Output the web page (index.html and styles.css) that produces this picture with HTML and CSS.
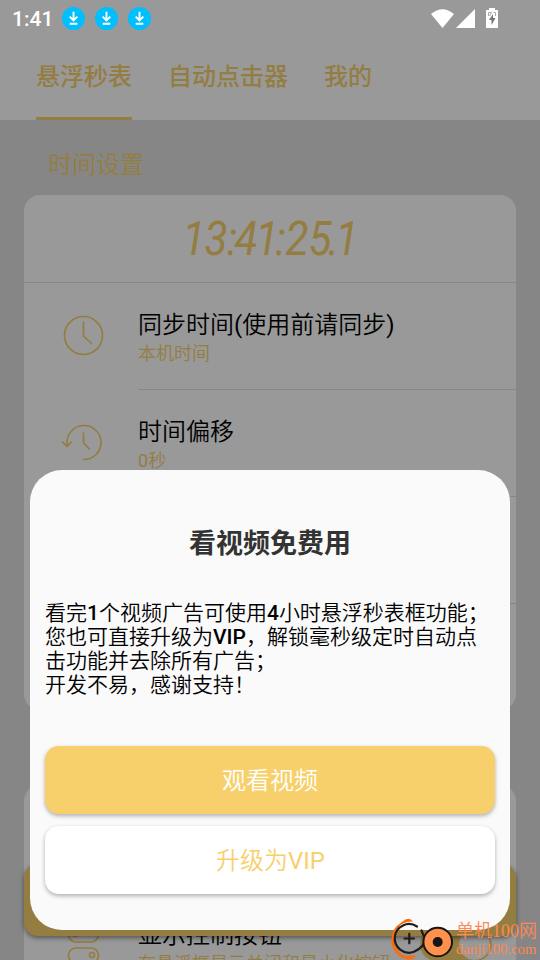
FILE: index.html
```html
<!DOCTYPE html>
<html lang="zh-CN">
<head>
<meta charset="utf-8">
<title>悬浮秒表</title>
<link rel="stylesheet" href="styles.css">
</head>
<body>
<div class="screen">
  <main class="app">
    <nav class="tabs">
      <span class="tab active">悬浮秒表</span><span class="tab">自动点击器</span><span class="tab">我的</span>
    </nav>
    <h2 class="section-title">时间设置</h2>
    <section class="card time-card">
      <div class="clock"><span>1</span><span>3</span><span>:</span><span>4</span><span>1</span><span>:</span><span>2</span><span>5</span><span>.</span><span>1</span></div>
      <div class="row">
        <div class="icon"><svg width="44" height="44" viewBox="0 0 44 44"><circle cx="22.500" cy="22.500" r="19"/><path d="M22.500 9v14l8 7.500"/></svg></div>
        <div class="info"><div class="name">同步时间<span class="latin">(</span>使用前请同步<span class="latin">)</span></div><div class="value">本机时间</div></div>
      </div>
      <div class="row">
        <div class="icon"><svg width="44" height="44" viewBox="0 0 44 44"><path d="M6 26V23A17 17 0 1 1 22.500 39.500M1.500 22l4.500 4.500 4.500-4.500M22.500 13v10l6 6"/></svg></div>
        <div class="info"><div class="name">时间偏移</div><div class="value"><span class="latin">0</span>秒</div></div>
      </div>
      <div class="row"><div class="icon"></div><div class="info"></div></div>
    </section>
    <section class="card display-card">
      <div class="row control-row">
        <div class="icon"><svg width="34" height="40" viewBox="0 0 34 40"><rect x="1.500" y="1" width="30" height="15" rx="7.500"/><circle cx="8" cy="8" r="2.500"/><rect x="1.500" y="22" width="30" height="15" rx="7.500"/><circle cx="25" cy="29" r="2.500"/></svg></div>
        <div class="info"><div class="name">显示控制按钮</div><div class="value">在悬浮框显示关闭和最小化按钮</div></div>
        <div class="switch"><i></i></div>
      </div>
    </section>
    <div class="start-button"></div>
  </main>
  <div class="scrim"></div>
  <header class="status">
    <span class="time">1:41</span>
    <span class="download"><svg viewBox="0 0 24 24"><path d="M12 5v9M8 10l4 4L16 10M8 17.500h8"/></svg></span>
    <span class="download"><svg viewBox="0 0 24 24"><path d="M12 5v9M8 10l4 4L16 10M8 17.500h8"/></svg></span>
    <span class="download"><svg viewBox="0 0 24 24"><path d="M12 5v9M8 10l4 4L16 10M8 17.500h8"/></svg></span>
    <svg class="signals" width="70" height="24" viewBox="0 0 70 24"><path d="M0 7Q11.500-2.500 23 7L11.500 21z"/><path d="M25 21H44V2z"/><path d="M58 3V1h6v2h3v18H55V3z"/><path class="bolt" d="M62 7l-4 6h2.500v5l4-7H62z"/><path class="notch" d="M57.500 9V5.500h3L58.500 9M62.500 5.500h2V9"/></svg>
  </header>
  <section class="dialog">
    <h1>看视频免费用</h1>
    <p>看完<b>1</b>个视频广告可使用<b>4</b>小时悬浮秒表框功能；<br>您也可直接升级为<b>VIP</b>，解锁毫秒级定时自动点<br>击功能并去除所有广告；<br>开发不易，感谢支持！</p>
    <button class="primary">观看视频</button>
    <button class="secondary">升级为<span class="latin">VIP</span></button>
  </section>
  <div class="watermark">
    <svg width="66" height="44" viewBox="0 0 66 44"><path class="orange" d="M23 5.500Q13 5 7.500 12 3 19 4.500 27 7 37 15 40L26 39.500Q24 44 18 43.500 5 41 2 29-1 14 12 6 19 0 23 5.500z"/><path class="ink" d="M27 10.500A14.300 14.300 0 1 0 24 35.800Q36 30 35.500 21M31.500 14.500l2 5M19.300 17.800v9.500M14.500 22.500h9.500"/><circle class="disc" cx="47.700" cy="26" r="14.300"/><circle class="hub" cx="47.700" cy="26" r="5"/></svg>
    <div class="brand"><span>单机100网</span><small>danji100.com</small></div>
  </div>
</div>
</body>
</html>
```
FILE: styles.css
```css
* { box-sizing: border-box; }
body { margin: 0; font-family: Roboto, "Noto Sans CJK SC", sans-serif; font-weight: 350; }
.screen { position: relative; width: 540px; height: 960px; overflow: hidden; }
.app { height: 960px; overflow: hidden; background: #e0e0e0; color: #000; }
.latin { font-weight: 400; }
.tabs { display: flex; gap: 36px; height: 120px; padding: 36px 36px 0; background: #fff; }
.tab { height: 84px; padding-top: 23px; font-size: 24px; line-height: 36px; font-weight: 500; color: #f7d06b; border-bottom: 3px solid transparent; }
.tab.active { border-color: #f7d06b; }
.section-title { height: 75px; margin: 0; padding: 27px 48px 0; font-size: 24px; line-height: 36px; font-weight: 350; color: #f7d06b; }
.card { width: 492px; margin: 0 auto; border-radius: 16px; background: #fff; }
.time-card { height: 515px; }
.clock { display: grid; grid-template-columns: 16px 28px 4px 24px 18px 9px 24px 22px 5px 22px; justify-content: center; height: 88px; padding: 19px 0 0 4px; border-bottom: 1px solid #e0e0e0; color: #f7d06b; font-size: 48px; line-height: 50px; font-weight: 400; font-style: italic; }
.clock span { display: flex; justify-content: center; transform: scaleX(.88); }
.row { display: flex; height: 107px; color: #f7d06b; }
.icon { display: flex; width: 114px; padding: 30px 0 0 37px; }
.icon svg { fill: none; stroke: #f7d06b; stroke-width: 1.7; stroke-linecap: round; stroke-linejoin: round; }
.info { flex: 1; padding-top: 25px; border-bottom: 1px solid #e0e0e0; white-space: nowrap; }
.name { color: #000; font-size: 24px; line-height: 34px; }
.value { font-size: 18px; line-height: 24px; }
.display-card { height: 300px; margin-top: 75px; padding-top: 108px; }
.control-row .icon { padding: 33px 0 0 43px; }
.switch { position: absolute; left: 420px; top: 928px; width: 72px; height: 33px; padding-left: 38px; border-radius: 17px; background: #f7d06b; }
.switch i { display: block; width: 33px; height: 33px; border: 1px solid #f7d06b; border-radius: 50%; background: #fff; }
.start-button { position: absolute; left: 24px; top: 864px; width: 492px; height: 72px; border-radius: 14px; background: #f7d06b; box-shadow: 0 2px 5px rgba(0,0,0,.45); }
.scrim { position: absolute; inset: 0; background: rgba(0,0,0,.4); }
.status { position: absolute; top: 0; left: 0; display: flex; align-items: center; width: 540px; height: 37px; padding-left: 12px; color: #fff; }
.time { width: 50px; font-size: 21px; font-weight: 500; }
.download { width: 23px; height: 23px; margin-right: 10px; border-radius: 50%; background: #00bfff; }
.download svg { display: block; fill: none; stroke: #fff; stroke-width: 2; }
.signals { margin: 0 42px 0 auto; transform: translateX(3px); fill: #fff; }
.signals .bolt { fill: #777; }
.signals .notch { fill: none; stroke: #aaa; stroke-width: 1; }
.dialog { position: absolute; left: 30px; top: 470px; width: 480px; height: 460px; padding: 54px 15px 0; border-radius: 32px; background: #fafafa; color: #000; }
.dialog h1 { margin: 0; color: #333; text-align: center; font-size: 27px; line-height: 40px; font-weight: 700; }
.dialog p { height: 145px; margin: 37px 0 0; white-space: nowrap; font-size: 21px; line-height: 24px; }
.dialog b { font-weight: 500; }
.dialog button { display: block; width: 450px; height: 68px; margin: 0 0 12px; padding: 2px 0 0; border: 0; border-radius: 14px; font: 350 24px/36px Roboto, "Noto Sans CJK SC", sans-serif; box-shadow: 0 2px 4px rgba(0,0,0,.3); }
.dialog .primary { background: #f7d06b; color: #fff; }
.dialog .secondary { background: #fff; color: #f7d06b; padding-left: 1px; }
.watermark { position: absolute; left: 390px; top: 916px; display: flex; width: 150px; height: 44px; }
.watermark svg { flex: none; }
.orange { fill: #ff6b0a; }
.ink { fill: none; stroke: #241b1b; stroke-width: 2.2; stroke-linecap: round; }
.disc { fill: #ff914d; stroke: #171515; stroke-width: 2; }
.hub { fill: #171515; }
.brand { display: flex; flex-direction: column; color: #ff8851; white-space: nowrap; font-family: "Liberation Serif", "Noto Sans CJK SC", serif; }
.brand span { height: 27px; font-size: 18px; line-height: 30px; }
.brand small { font-size: 14.7px; line-height: 13px; }
.latin { font-weight: 400; }
```
